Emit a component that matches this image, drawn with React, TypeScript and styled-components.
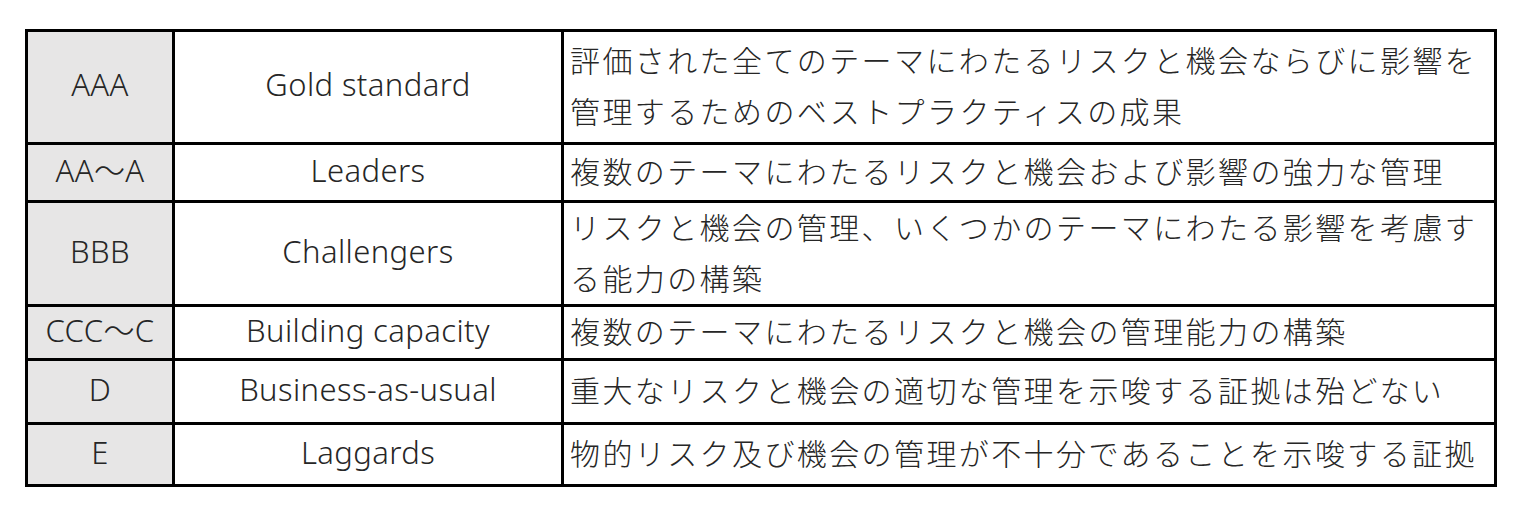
import React, { FC } from 'react';
import styled, { createGlobalStyle } from 'styled-components';

interface RatingRow {
  grade: string;
  label: string;
  description: string;
  height: number;
}

const rows: RatingRow[] = [
  {
    grade: 'AAA',
    label: 'Gold standard',
    description:
      '評価された全てのテーマにわたるリスクと機会ならびに影響を管理するためのベストプラクティスの成果',
    height: 110,
  },
  {
    grade: 'AA～A',
    label: 'Leaders',
    description: '複数のテーマにわたるリスクと機会および影響の強力な管理',
    height: 55,
  },
  {
    grade: 'BBB',
    label: 'Challengers',
    description:
      'リスクと機会の管理、いくつかのテーマにわたる影響を考慮する能力の構築',
    height: 101,
  },
  {
    grade: 'CCC～C',
    label: 'Building capacity',
    description: '複数のテーマにわたるリスクと機会の管理能力の構築',
    height: 51,
  },
  {
    grade: 'D',
    label: 'Business-as-usual',
    description: '重大なリスクと機会の適切な管理を示唆する証拠は殆どない',
    height: 61,
  },
  {
    grade: 'E',
    label: 'Laggards',
    description: '物的リスク及び機会の管理が不十分であることを示唆する証拠',
    height: 59,
  },
];

const GlobalStyle = createGlobalStyle`
  html, body {
    margin: 0;
    padding: 0;
    background: #ffffff;
  }
  body {
    font-family: "Noto Sans CJK JP", "Noto Sans", sans-serif;
    font-weight: 300;
    color: #262626;
  }
  * {
    box-sizing: border-box;
  }
`;

const Page = styled.div`
  padding: 29px 0 0 25px;
`;

const Grid = styled.div`
  display: grid;
  grid-template-columns: 144px 386px 930px;
  gap: 3px;
  padding: 3px;
  width: max-content;
  background: #000000;
`;

const Cell = styled.div<{ $h: number }>`
  height: ${({ $h }) => `${$h}px`};
  display: flex;
  align-items: center;
  padding-bottom: 4px;
  line-height: 51px;
`;

const LatinCell = styled(Cell)`
  justify-content: center;
  font-family: "Noto Sans", "Noto Sans CJK JP", sans-serif;
  font-size: 31px;
  letter-spacing: 0.4px;
  padding-bottom: 5px;
`;

const GradeCell = styled(LatinCell)`
  background: #e7e6e6;
`;

const LabelCell = styled(LatinCell)`
  background: #ffffff;
`;

const DescCell = styled(Cell)`
  padding-left: 6px;
  background: #ffffff;
  font-size: 30px;
  letter-spacing: 2.4px;
`;

const App: FC = () => {
  return (
    <>
      <GlobalStyle />
      <Page>
        <Grid>
          {rows.map((row) => (
            <React.Fragment key={row.grade}>
              <GradeCell $h={row.height}>{row.grade}</GradeCell>
              <LabelCell $h={row.height}>{row.label}</LabelCell>
              <DescCell $h={row.height}>{row.description}</DescCell>
            </React.Fragment>
          ))}
        </Grid>
      </Page>
    </>
  );
};

export default App;
